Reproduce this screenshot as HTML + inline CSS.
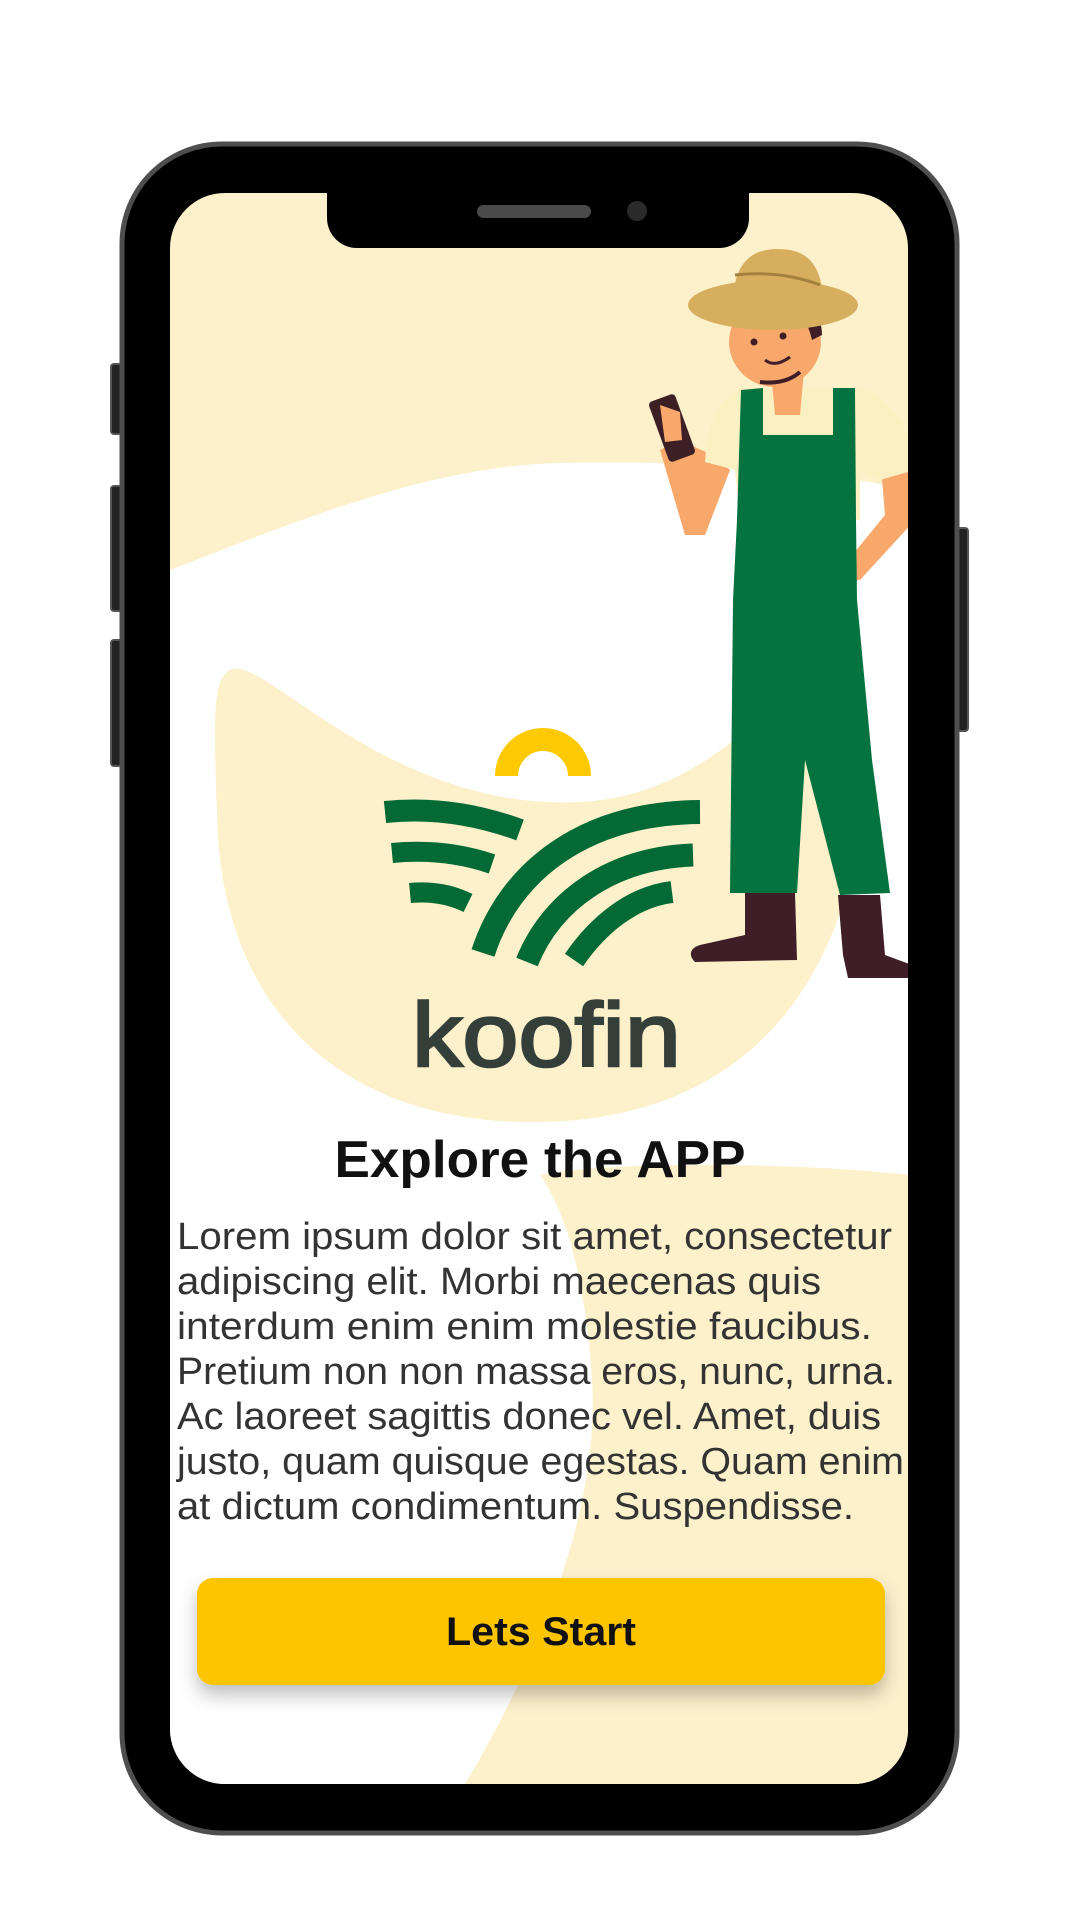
<!DOCTYPE html>
<html><head><meta charset="utf-8"><style>
html,body{margin:0;padding:0;background:#fff;width:1080px;height:1920px;overflow:hidden}
svg{display:block}
text{font-family:"Liberation Sans",Arial,sans-serif}
</style></head><body>
<svg width="1080" height="1920" viewBox="0 0 1080 1920" xmlns="http://www.w3.org/2000/svg">
<defs>
<clipPath id="scr"><rect x="170" y="193" width="738" height="1591" rx="55"/></clipPath>
<filter id="sh" x="-10%" y="-30%" width="120%" height="180%"><feDropShadow dx="0" dy="10" stdDeviation="9" flood-color="#000" flood-opacity="0.25"/></filter>
</defs>
<rect x="111" y="364" width="12" height="70" rx="3" fill="#222" stroke="#555" stroke-width="2"/>
<rect x="111" y="486" width="12" height="125" rx="3" fill="#222" stroke="#555" stroke-width="2"/>
<rect x="111" y="640" width="12" height="126" rx="3" fill="#222" stroke="#555" stroke-width="2"/>
<rect x="956" y="528" width="12" height="203" rx="3" fill="#222" stroke="#555" stroke-width="2"/>
<rect x="122" y="144" width="835" height="1689" rx="100" fill="#000" stroke="#4e4e4e" stroke-width="5"/>
<g clip-path="url(#scr)">
<rect x="170" y="193" width="738" height="1591" fill="#fdf1cc"/>
<path d="M170,570 C300,520 430,466 560,463 C700,460 820,470 910,490 L910,1784 L170,1784 Z" fill="#fff"/>
<path d="M233,669 C265,660 380,795 548,802 C650,808 720,760 790,690 L850,880 C800,1070 660,1125 523,1122 C330,1118 228,1000 218,836 C212,700 214,675 233,669 Z" fill="#fdf1cc"/>
<path d="M540,1175 C620,1160 800,1163 910,1175 L910,1784 L465,1784 C545,1650 600,1500 592,1380 C587,1300 572,1220 540,1175 Z" fill="#fdf1cc"/>
<path d="M506.5,776 A36.5,36.5 0 0 1 579.5,776" fill="none" stroke="#fdc900" stroke-width="23"/>
<g fill="none" stroke="#036a35" stroke-linecap="butt">
<path d="M385,812 Q452,805 520,830" stroke-width="22"/>
<path d="M392,853 Q445,848 492,864" stroke-width="20"/>
<path d="M410,893 Q442,890 468,903" stroke-width="20"/>
<path d="M483,953 C510,870 585,813 700,812" stroke-width="24"/>
<path d="M527,962 C552,900 612,858 693,855" stroke-width="23"/>
<path d="M574,960 C598,925 632,897 672,892" stroke-width="22"/>
</g>
<text x="412" y="1066" font-size="90" font-weight="normal" fill="#343f3a" stroke="#343f3a" stroke-width="2.5" textLength="269" lengthAdjust="spacingAndGlyphs">koofin</text>
<g>
<path d="M880,455 L915,470 L915,520 L860,580 L840,570 L885,515 Z" fill="#f9a86b"/>
<path d="M835,560 L850,550 L862,578 L840,590 L828,580 Z" fill="#f9a86b"/>
<path d="M712,455 L730,470 L705,535 L685,535 L660,450 L680,440 Z" fill="#f9a86b"/>
<path d="M740,388 L860,388 C895,400 912,430 915,470 L880,480 L860,470 L860,520 L740,520 L735,470 L705,462 C708,420 722,395 740,388 Z" fill="#fbf0c2"/>
<path d="M770,360 L805,360 L800,415 L775,415 Z" fill="#f9a86b"/>
<g transform="rotate(-20 672 428)"><rect x="658" y="396" width="28" height="64" rx="4" fill="#3d1f26"/></g>
<path d="M660,405 L680,412 L682,440 L665,442 Z" fill="#f9a86b"/>
<path d="M741,390 L763,388 L763,435 L833,435 L833,388 L855,388 L856,520 L857,600 L872,760 L890,893 L840,895 L805,760 L797,893 L730,893 L733,600 L737,520 Z" fill="#04733f"/>
<path d="M745,893 L795,893 L797,960 L695,962 C688,955 690,948 700,945 L745,935 Z" fill="#3f1e28"/>
<path d="M838,895 L880,895 L885,955 L912,965 L912,978 L848,978 L843,955 Z" fill="#3f1e28"/>
<ellipse cx="775" cy="342" rx="46" ry="45" fill="#f9a86b"/>
<path d="M790,300 C805,300 822,310 822,335 L812,340 C808,322 800,312 790,305 Z" fill="#3f1e28"/>
<circle cx="754" cy="342" r="3.5" fill="#3f1e28"/><circle cx="783" cy="336" r="3.5" fill="#3f1e28"/>
<path d="M765,360 Q775,368 790,357" fill="none" stroke="#3f1e28" stroke-width="3"/>
<path d="M760,382 Q785,385 800,372" fill="none" stroke="#3f1e28" stroke-width="4"/>
<ellipse cx="773" cy="305" rx="85" ry="25" fill="#d7ae5e"/>
<path d="M733,305 C733,262 752,249 778,249 C805,249 823,262 823,305 Z" fill="#d7ae5e"/>
<path d="M735,275 Q780,270 820,285" fill="none" stroke="#a3803e" stroke-width="3"/>
</g>
<text x="540" y="1177" font-size="52" font-weight="bold" fill="#111" text-anchor="middle" textLength="411" lengthAdjust="spacingAndGlyphs">Explore the APP</text>
<g font-size="38" fill="#333">
<text x="177" y="1249" textLength="715" lengthAdjust="spacingAndGlyphs">Lorem ipsum dolor sit amet, consectetur</text>
<text x="177" y="1294" textLength="644" lengthAdjust="spacingAndGlyphs">adipiscing elit. Morbi maecenas quis</text>
<text x="177" y="1339" textLength="695" lengthAdjust="spacingAndGlyphs">interdum enim enim molestie faucibus.</text>
<text x="177" y="1384" textLength="718" lengthAdjust="spacingAndGlyphs">Pretium non non massa eros, nunc, urna.</text>
<text x="177" y="1429" textLength="704" lengthAdjust="spacingAndGlyphs">Ac laoreet sagittis donec vel. Amet, duis</text>
<text x="177" y="1474" textLength="727" lengthAdjust="spacingAndGlyphs">justo, quam quisque egestas. Quam enim</text>
<text x="177" y="1519" textLength="677" lengthAdjust="spacingAndGlyphs">at dictum condimentum. Suspendisse.</text>
</g>
<rect x="197" y="1578" width="688" height="107" rx="16" fill="#fdc500" filter="url(#sh)"/>
<text x="541" y="1645" font-size="40" font-weight="bold" fill="#111" text-anchor="middle" textLength="190" lengthAdjust="spacingAndGlyphs">Lets Start</text>
</g>
<path d="M327,190 L749,190 L749,218 A30,30 0 0 1 719,248 L357,248 A30,30 0 0 1 327,218 Z" fill="#000"/>
<rect x="477" y="205" width="114" height="13" rx="6.5" fill="#4a4a4a"/>
<circle cx="637" cy="211" r="10" fill="#2a2a2a"/>
</svg>
</body></html>
